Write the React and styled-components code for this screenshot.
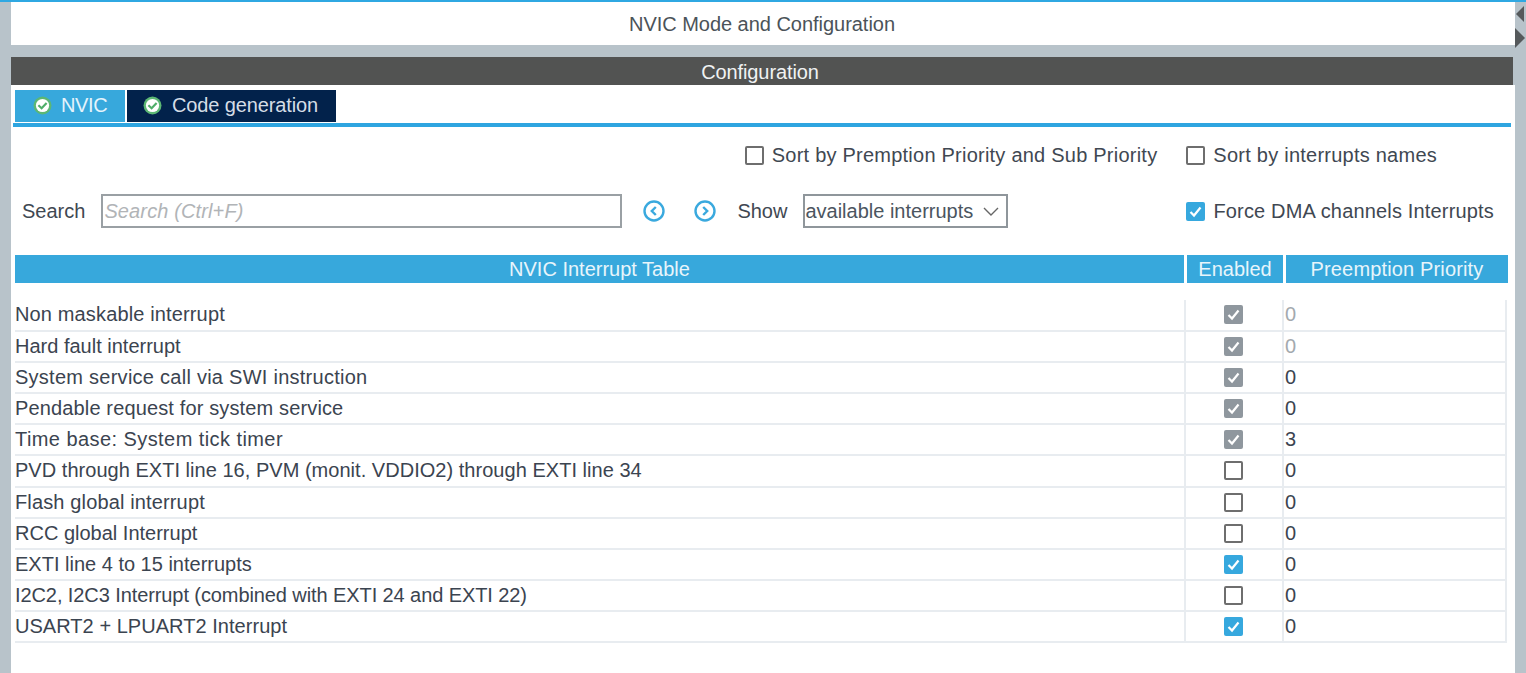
import React from "react";
import styled, { createGlobalStyle } from "styled-components";

const Global = createGlobalStyle`
  html, body { margin: 0; padding: 0; background: #b8c3ca; overflow: hidden; }
  * { box-sizing: border-box; }
  body { font-family: "Liberation Sans", Arial, sans-serif; font-size: 20px; color: #3f4852; }
`;

const Page = styled.div`
  width: 1526px; height: 673px; display: flex; flex-direction: column;
  background: #b8c3ca; border-top: 2px solid #2fa8e2; overflow: hidden;
`;
const Body = styled.div`display: flex; flex: 1; min-height: 0; padding-left: 11px;`;
const Main = styled.div`width: 1504px; display: flex; flex-direction: column;`;
const Gutter = styled.div`
  width: 11px; display: flex; flex-direction: column; align-items: flex-start; gap: 6px; padding-top: 4px;
`;
const TitleBar = styled.div`
  height: 43px; background: #fff; display: flex; align-items: center; justify-content: center;
  padding: 2px 2px 0 0; font-size: 20px; letter-spacing: -0.03px; color: #4b5359; margin-bottom: 12px;
`;
const ConfigBar = styled.div`
  height: 28px; background: #525352; color: #f0f2f2; margin-right: 2px; padding: 2px 4px 0 0;
  display: flex; align-items: center; justify-content: center; font-size: 20px; letter-spacing: -0.1px;
`;
const Panel = styled.div`flex: 1; background: #fff; display: flex; flex-direction: column; padding-top: 5px;`;
const Tabs = styled.div`
  margin-left: 2px; margin-right: 4px; height: 37px; display: flex; gap: 2px; padding-left: 2px;
  border-bottom: 4px solid #2ea5e0;
`;
const Tab = styled.div`
  width: ${p => p.$w}px; height: 32px; display: flex; align-items: center; gap: ${p => p.$gap}px;
  padding: 0 0 2px ${p => p.$pad}px; font-size: 20px; letter-spacing: ${p => p.$track}px;
  background: ${p => (p.$active ? "#37a8dc" : "#02224b")};
  color: ${p => (p.$active ? "#e4f3fb" : "#d5dde6")};
`;
const SortRow = styled.div`
  height: 58px; display: flex; align-items: center; justify-content: flex-end; padding: 0 78px 2px 0;
`;
const CheckLabel = styled.label`
  display: flex; align-items: center; gap: 8px; margin-left: ${p => p.$ml || 0}px; white-space: nowrap;
  letter-spacing: ${p => p.$track || 0}px;
`;
const SearchRow = styled.div`
  height: 48px; margin-top: 2px; padding-left: 11px; padding-right: 21px; display: flex; align-items: center;
`;
const Label = styled.span`margin: 0 ${p => p.$mr || 0}px 0 ${p => p.$ml || 0}px;`;
const SearchBox = styled.div`
  width: 521px; height: 34px; border: 2px solid #9aa0a4; padding-left: 1px; display: flex; align-items: center;
  font-style: italic; color: #b1b4b7; letter-spacing: 0.13px;
`;
const RoundBtn = styled.div`width: 24px; height: 24px; margin-left: ${p => p.$ml}px; display: flex;`;
const Select = styled.div`
  width: 205px; height: 34px; border: 2px solid #8f969b; margin-left: 16px; padding: 0 7px 0 0;
  display: flex; align-items: center; justify-content: space-between; color: #4b5560;
`;
const ForceWrap = styled.div`margin-left: auto;`;

const Table = styled.div`margin: 20px 0 0 4px; width: 1492px;`;
const HeadRow = styled.div`
  display: grid; grid-template-columns: 1169px 96px 222px; column-gap: 3px; height: 28px; margin-bottom: 17.4px;
`;
const HeadCell = styled.div`
  background: #37a8dc; color: #e8f5fb; display: flex; align-items: center; justify-content: center;
  letter-spacing: ${p => p.$track || 0}px;
`;
const Row = styled.div`
  display: grid; grid-template-columns: 1169px 100px 223px; height: 31.2px;
  border-bottom: 2px solid #e8ecf0; color: #3b4450;
`;
const NameCell = styled.div`
  display: flex; align-items: center; white-space: nowrap; letter-spacing: ${p => p.$track}px;
`;
const EnabledCell = styled.div`
  display: flex; align-items: center; justify-content: center; padding-right: 2px;
  border-left: 2px solid #e8ecf0; border-right: 2px solid #e8ecf0;
`;
const PrioCell = styled.div`
  display: flex; align-items: center; padding-left: 1px; border-right: 2px solid #e8ecf0;
  color: ${p => (p.$muted ? "#a3a9ae" : "#3b4450")};
`;
const Box = styled.span`
  width: 19px; height: 19px; flex: none; border-radius: 2px; display: inline-flex; align-items: center; justify-content: center;
  background: ${p => (p.$state === "on" ? "#36a8de" : p.$state === "off" ? "#8f979e" : "#fff")};
  border: ${p => (p.$state === "empty" ? "2px solid #6e6e6e" : "none")};
`;

const Check = ({ state = "empty" }) => (
  <Box $state={state}>
    {state !== "empty" && (
      <svg width="15" height="15" viewBox="0 0 15 15" fill="none">
        <path d="M2.5 8 L6 11.5 L12.5 3.5" stroke="#fff" strokeWidth="2.2" />
      </svg>
    )}
  </Box>
);

const TabIcon = () => (
  <svg width="19" height="19" viewBox="0 0 19 19" style={{ flex: "none" }}>
    <circle cx="9.5" cy="9.5" r="9" fill="#5cb774" />
    <circle cx="9.5" cy="9.5" r="6.6" fill="#fff" />
    <path d="M5.4 9.3 L8.6 12.2 L13.6 7" fill="none" stroke="#4fae69" strokeWidth="2.2" />
  </svg>
);

const Round = ({ dir }) => (
  <svg width="24" height="24" viewBox="0 0 24 24" fill="none" stroke="#3aa9de">
    <circle cx="12" cy="12" r="9.5" strokeWidth="2.4" />
    <path d={dir === "left" ? "M13.8 8 L9.8 12 L13.8 16" : "M10.2 8 L14.2 12 L10.2 16"} strokeWidth="2.4" />
  </svg>
);

const Arrow = ({ dir }) => (
  <svg width="11" height={dir === "left" ? 16 : 20} viewBox={dir === "left" ? "0 0 11 16" : "0 0 11 20"}>
    <path d={dir === "left" ? "M9 0 V16 L1 8 Z" : "M0 0 V20 L10 10 Z"} fill="#55595b" />
  </svg>
);

const rows = [
  ["Non maskable interrupt", "off", "0", true, 0.14],
  ["Hard fault interrupt", "off", "0", true, 0],
  ["System service call via SWI instruction", "off", "0", false, 0.26],
  ["Pendable request for system service", "off", "0", false, 0.14],
  ["Time base: System tick timer", "off", "3", false, 0.43],
  ["PVD through EXTI line 16, PVM (monit. VDDIO2) through EXTI line 34", "empty", "0", false, 0.03],
  ["Flash global interrupt", "empty", "0", false, 0.14],
  ["RCC global Interrupt", "empty", "0", false, 0],
  ["EXTI line 4 to 15 interrupts", "on", "0", false, 0],
  ["I2C2, I2C3 Interrupt (combined with EXTI 24 and EXTI 22)", "empty", "0", false, -0.09],
  ["USART2 + LPUART2 Interrupt", "on", "0", false, 0.04],
];

export default function App() {
  return (
    <Page>
      <Global />
      <Body>
        <Main>
          <TitleBar>NVIC Mode and Configuration</TitleBar>
          <ConfigBar>Configuration</ConfigBar>
          <Panel>
            <Tabs>
              <Tab $active $w={110} $pad={18} $gap={9} $track={-0.4}><TabIcon />NVIC</Tab>
              <Tab $w={209} $pad={16} $gap={10} $track={-0.12}><TabIcon />Code generation</Tab>
            </Tabs>
            <SortRow>
              <CheckLabel $track={0.23}><Check />Sort by Premption Priority and Sub Priority</CheckLabel>
              <CheckLabel $ml={29} $track={0.24}><Check />Sort by interrupts names</CheckLabel>
            </SortRow>
            <SearchRow>
              <Label $mr={16}>Search</Label>
              <SearchBox>Search (Ctrl+F)</SearchBox>
              <RoundBtn $ml={20}><Round dir="left" /></RoundBtn>
              <RoundBtn $ml={27}><Round dir="right" /></RoundBtn>
              <Label $ml={20}>Show</Label>
              <Select>
                available interrupts
                <svg width="16" height="9" viewBox="0 0 16 9" fill="none">
                  <path d="M1 1 L8 8 L15 1" stroke="#666" strokeWidth="1.4" />
                </svg>
              </Select>
              <ForceWrap>
                <CheckLabel $track={0.17}><Check state="on" />Force DMA channels Interrupts</CheckLabel>
              </ForceWrap>
            </SearchRow>
            <Table>
              <HeadRow>
                <HeadCell>NVIC Interrupt Table</HeadCell>
                <HeadCell>Enabled</HeadCell>
                <HeadCell $track={0.15}>Preemption Priority</HeadCell>
              </HeadRow>
              {rows.map(([name, state, prio, muted, track]) => (
                <Row key={name}>
                  <NameCell $track={track}>{name}</NameCell>
                  <EnabledCell><Check state={state} /></EnabledCell>
                  <PrioCell $muted={muted}>{prio}</PrioCell>
                </Row>
              ))}
            </Table>
          </Panel>
        </Main>
        <Gutter>
          <Arrow dir="left" />
          <Arrow dir="right" />
        </Gutter>
      </Body>
    </Page>
  );
}
